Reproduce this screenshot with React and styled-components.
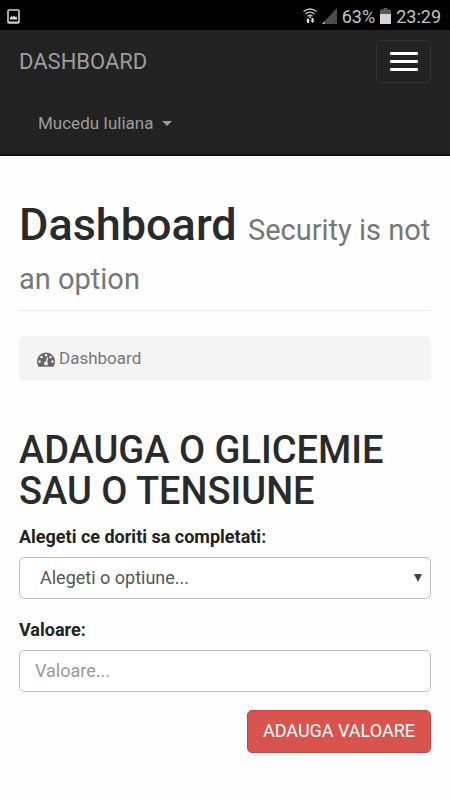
import React from "react";
import styled, { createGlobalStyle, ThemeProvider } from "styled-components";

const theme = {
  font: 'Roboto, "Liberation Sans", sans-serif',
  gutter: "19px",
  radius: "5px",
  colors: {
    bar: "#222222",
    barBorder: "#101010",
    barText: "#9d9d9d",
    heading: "#2a2a2a",
    muted: "#777777",
    border: "#bfbfbf",
    danger: "#d9534f",
    dangerBorder: "#c9423e",
  },
};

const GlobalStyle = createGlobalStyle`
  *, *::before, *::after {
    box-sizing: border-box;
  }
  body {
    margin: 0;
    background: #fefefe;
    color: #222222;
    font-family: ${theme.font};
    font-size: 18px;
    line-height: 25px;
  }
  button, input, select {
    font: inherit;
  }
`;

const StatusBar = styled.div`
  display: flex;
  align-items: center;
  gap: 5px;
  height: 30px;
  padding: 2px 9px 0 7px;
  background: #000000;
  color: #c4c4c4;
`;

const Spacer = styled.span`
  flex: 1;
`;

const Navbar = styled.nav`
  background: ${(props) => props.theme.colors.bar};
  border-bottom: 2px solid ${(props) => props.theme.colors.barBorder};
`;

const NavTop = styled.div`
  display: flex;
  align-items: center;
  justify-content: space-between;
  height: 62px;
  padding: 0 ${(props) => props.theme.gutter};
`;

const Brand = styled.a`
  color: ${(props) => props.theme.colors.barText};
  font-size: 22px;
  text-decoration: none;
`;

const Toggle = styled.button`
  display: flex;
  flex-direction: column;
  align-items: center;
  justify-content: center;
  gap: 5px;
  width: 55px;
  height: 43px;
  padding: 0;
  background: transparent;
  border: 1px solid #333333;
  border-radius: ${(props) => props.theme.radius};
`;

const ToggleBar = styled.span`
  width: 28px;
  height: 3px;
  border-radius: 1px;
  background: #ffffff;
`;

const UserMenu = styled.button`
  display: flex;
  align-items: center;
  gap: 9px;
  height: 62px;
  padding: 0 38px;
  background: transparent;
  border: 0;
  color: ${(props) => props.theme.colors.barText};
  font-size: 17px;
`;

const Caret = styled.span`
  border-top: 5px solid currentColor;
  border-left: 5px solid transparent;
  border-right: 5px solid transparent;
`;

const Main = styled.main`
  padding: 44px ${(props) => props.theme.gutter};
`;

const PageTitle = styled.h1`
  margin: 0 0 25px;
  padding-bottom: 12px;
  border-bottom: 1px solid #ececec;
  color: ${(props) => props.theme.colors.heading};
  font-size: 45px;
  font-weight: 500;
  line-height: 49px;
`;

const Subtitle = styled.small`
  color: ${(props) => props.theme.colors.muted};
  font-size: 29px;
  font-weight: 400;
  line-height: 1;
`;

const Breadcrumb = styled.ol`
  display: flex;
  margin: 0 0 49px;
  padding: 10px 18px;
  background: #f4f4f4;
  border-radius: ${(props) => props.theme.radius};
  list-style: none;
`;

const Crumb = styled.li`
  display: flex;
  align-items: center;
  gap: 4px;
  color: ${(props) => props.theme.colors.muted};
  font-size: 17px;
`;

const SectionTitle = styled.h2`
  margin: 0 0 12px;
  color: ${(props) => props.theme.colors.heading};
  font-size: 38px;
  font-weight: 500;
  line-height: 41px;
`;

const Form = styled.form`
  display: flex;
  flex-direction: column;
`;

const Field = styled.div`
  display: flex;
  flex-direction: column;
  gap: 8px;
  margin-bottom: 18px;
`;

const Label = styled.label`
  font-weight: 700;
`;

const Input = styled.input`
  width: 100%;
  height: 42px;
  padding: 0 15px 2px;
  background: #ffffff;
  border: 1px solid ${(props) => props.theme.colors.border};
  border-radius: ${(props) => props.theme.radius};
  color: #555555;

  &::placeholder {
    color: #999999;
    opacity: 1;
  }
`;

const SelectBox = styled.div`
  display: grid;
  align-items: center;

  > * {
    grid-area: 1 / 1;
  }
`;

const Select = styled(Input)`
  appearance: none;
  padding: 0 20px 2px;
`;

const Arrow = styled.svg`
  justify-self: end;
  margin-right: 9px;
  pointer-events: none;
`;

const Submit = styled.button`
  align-self: flex-end;
  height: 43px;
  padding: 0 15px 2px;
  background: ${(props) => props.theme.colors.danger};
  border: 1px solid ${(props) => props.theme.colors.dangerBorder};
  border-radius: ${(props) => props.theme.radius};
  color: #ffffff;
`;

const PictureIcon = () => (
  <svg width="13" height="15" viewBox="0 0 13 15" aria-hidden="true">
    <rect x="1" y="1" width="11" height="13" rx="1" fill="none" stroke="#d0d0d0" strokeWidth="1.6" />
    <path d="M3 10.500V8.500l1.500-1.500 1.200 1 1.300-1.500 1.200 1.500 1-.6.8 1v2.100z" fill="#d0d0d0" />
    <path d="M1 12.500h11V14H1z" fill="#d0d0d0" />
  </svg>
);

const WifiIcon = () => (
  <svg width="14" height="16" viewBox="0 0 14 16" aria-hidden="true">
    <g fill="none" stroke="#c4c4c4" strokeWidth="1.4">
      <path d="M.5 3.500Q7-1.500 13.500 3.500" />
      <path d="M2.500 6Q7 2.300 11.500 6" />
      <path d="M4.500 8.300Q7 6.300 9.500 8.300" />
    </g>
    <circle cx="7" cy="9.300" r="1" fill="#c4c4c4" />
    <path d="M4 15h2v-2.500h1L5 10l-2 2.500h1zM8.500 10h2v2.500h1l-2 2.500-2-2.500h1z" fill="#e0e0e0" />
  </svg>
);

const SignalIcon = () => (
  <svg width="15" height="16" viewBox="0 0 15 16" aria-hidden="true">
    <path d="M15 0v16H0z" fill="#4c4c4c" />
    <path d="M2.500 13v3H0z" fill="#b0b0b0" />
  </svg>
);

const BatteryIcon = () => (
  <svg width="11" height="16" viewBox="0 0 11 16" aria-hidden="true">
    <path d="M3.500 0h4v1.500H11V16H0V1.500h3.500z" fill="#5a5a5a" />
    <path d="M0 6h11v10H0z" fill="#d4d4d4" />
  </svg>
);

const GaugeIcon = () => (
  <svg width="18" height="18" viewBox="0 0 1792 1792" fill="#666666" aria-hidden="true">
    <path d="M384 1152q0-53-37.5-90.5t-90.5-37.5-90.5 37.5-37.5 90.5 37.5 90.5 90.5 37.5 90.5-37.5 37.5-90.5zm192-448q0-53-37.5-90.5t-90.5-37.5-90.5 37.5-37.5 90.5 37.5 90.5 90.5 37.5 90.5-37.5 37.5-90.5zm428 481l101-382q6-26-7.5-48.5t-38.500-29.500-48 6.500-30 39.500l-101 382q-60 5-107 43.500t-63 98.500q-20 77 20 146t117 89 146-20 89-117q16-60-6-117t-72-91zm660-33q0-53-37.500-90.500t-90.500-37.500-90.500 37.500-37.500 90.500 37.500 90.500 90.500 37.500 90.500-37.500 37.500-90.500zm-640-640q0-53-37.500-90.500t-90.500-37.500-90.500 37.500-37.500 90.500 37.500 90.500 90.500 37.500 90.500-37.500 37.500-90.500zm448 192q0-53-37.500-90.500t-90.500-37.500-90.500 37.500-37.500 90.500 37.500 90.500 90.500 37.500 90.500-37.500 37.500-90.500zm320 448q0 261-141 483-19 29-54 29h-1402q-35 0-54-29-141-221-141-483 0-182 71-348t191-286 286-191 348-71 348 71 286 191 191 286 71 348z" />
  </svg>
);

const Header = () => (
  <Navbar>
    <NavTop>
      <Brand href="#">DASHBOARD</Brand>
      <Toggle type="button" aria-label="Toggle navigation">
        <ToggleBar />
        <ToggleBar />
        <ToggleBar />
      </Toggle>
    </NavTop>
    <UserMenu type="button">
      Mucedu Iuliana <Caret />
    </UserMenu>
  </Navbar>
);

const App = () => {
  return (
    <ThemeProvider theme={theme}>
      <GlobalStyle />
      <StatusBar>
        <PictureIcon />
        <Spacer />
        <WifiIcon />
        <SignalIcon />
        <span>63%</span>
        <BatteryIcon />
        <span>23:29</span>
      </StatusBar>
      <Header />
      <Main>
        <PageTitle>
          Dashboard <Subtitle>Security is not an option</Subtitle>
        </PageTitle>
        <Breadcrumb>
          <Crumb>
            <GaugeIcon /> Dashboard
          </Crumb>
        </Breadcrumb>
        <SectionTitle>ADAUGA O GLICEMIE SAU O TENSIUNE</SectionTitle>
        <Form onSubmit={(e) => e.preventDefault()}>
          <Field>
            <Label htmlFor="option">Alegeti ce doriti sa completati:</Label>
            <SelectBox>
              <Select as="select" id="option">
                <option>Alegeti o optiune...</option>
              </Select>
              <Arrow width="8" height="8" viewBox="0 0 8 8" aria-hidden="true">
                <path d="M0 0h8L4 8z" fill="#444444" />
              </Arrow>
            </SelectBox>
          </Field>
          <Field>
            <Label htmlFor="value">Valoare:</Label>
            <Input id="value" type="text" placeholder="Valoare..." />
          </Field>
          <Submit type="submit">ADAUGA VALOARE</Submit>
        </Form>
      </Main>
    </ThemeProvider>
  );
};

export default App;
